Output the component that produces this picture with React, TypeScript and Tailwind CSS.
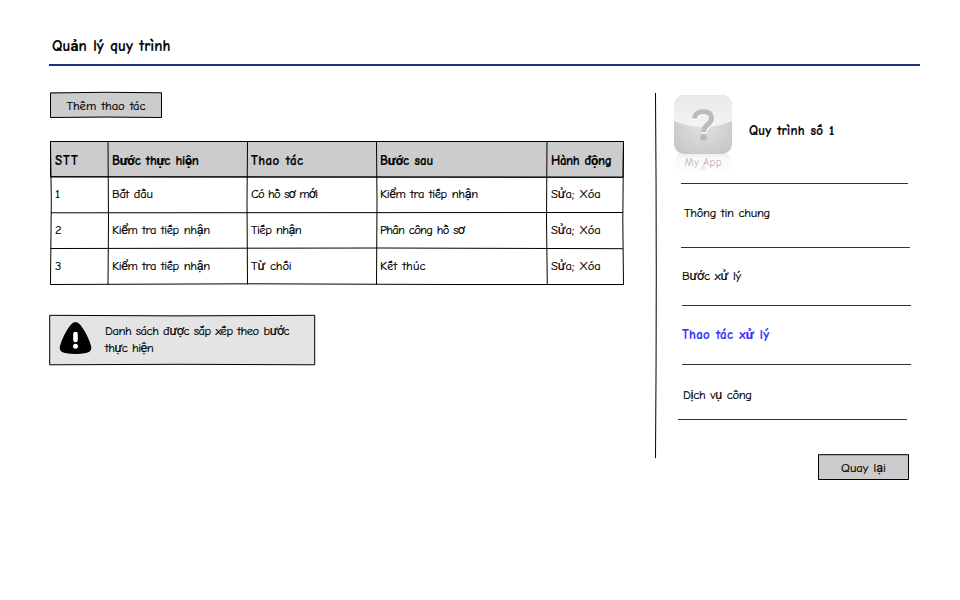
import type { ReactNode } from "react";

type Cell = { text: string; tracking?: string };
type Row = { no: string; cells: Cell[] };

const check: Cell = { text: "Kiểm tra tiếp nhận", tracking: "tracking-[-0.33px]" };

const rows: Row[] = [
  { no: "1", cells: [{ text: "Bắt đầu", tracking: "tracking-[-0.3px]" }, { text: "Có hồ sơ mới", tracking: "tracking-[-0.8px]" }, check] },
  { no: "2", cells: [check, { text: "Tiếp nhận", tracking: "tracking-[-0.5px]" }, { text: "Phân công hồ sơ", tracking: "tracking-[-0.68px]" }] },
  { no: "3", cells: [check, { text: "Từ chối", tracking: "tracking-[-0.15px]" }, { text: "Kết thúc", tracking: "tracking-[0.1px]" }] },
];

const columns = "grid grid-cols-[57px_139px_129px_171px_76px] h-9 items-center *:pl-1 *:whitespace-nowrap";

/* Hand-drawn strokes laid over the box they outline */
function Sketch({ d, width = 1 }: { d: string; width?: number }) {
  return (
    <svg className="pointer-events-none absolute inset-0 size-full overflow-visible" fill="none" stroke="#000" strokeWidth={width}>
      <path d={d} />
    </svg>
  );
}

function SketchButton({ className, outline, children }: { className: string; outline: string; children: ReactNode }) {
  return (
    <button className={`relative flex h-[26px] items-center justify-center bg-[#cccccc] pt-[3px] text-[12.5px] [word-spacing:1px] ${className}`}>
      <Sketch d={outline} />
      <span className="relative">{children}</span>
    </button>
  );
}

function AppIcon() {
  return (
    <svg className="h-[80px] w-[62px] shrink-0" viewBox="0 0 62 80">
      <defs>
        <linearGradient id="top" x1="0" y1="0" x2="0" y2="1">
          <stop offset="0" stopColor="#e9e9e9" />
          <stop offset="1" stopColor="#f3f3f3" />
        </linearGradient>
        <radialGradient id="body" cx=".5" cy=".45" r=".6">
          <stop offset="0" stopColor="#e4e4e4" />
          <stop offset="1" stopColor="#c9c9c9" />
        </radialGradient>
        <linearGradient id="mirror" x1="0" y1="0" x2="0" y2="1">
          <stop offset="0" stopColor="#ededed" />
          <stop offset=".35" stopColor="#fafafa" />
          <stop offset="1" stopColor="#fcfcfc" />
        </linearGradient>
        <clipPath id="tile">
          <rect x="2" y="2" width="58" height="59" rx="10" />
        </clipPath>
      </defs>
      <path d="M3 78V67Q3 60 11 60H51Q59 60 59 67V78Z" fill="url(#mirror)" />
      <g clipPath="url(#tile)">
        <rect x="2" y="2" width="58" height="59" fill="url(#body)" />
        <path d="M2 2H60V28Q31 40 2 28Z" fill="url(#top)" />
      </g>
      <path d="M22.500 25.500C23 20.500 26 18.800 31.500 18.800S39.500 21 39.500 25.500C39.500 32 31.500 31 31.500 39" fill="none" stroke="#fff" strokeWidth="5" transform="translate(.6 1)" />
      <path d="M22.500 25.500C23 20.500 26 18.800 31.500 18.800S39.500 21 39.500 25.500C39.500 32 31.500 31 31.500 39" fill="none" stroke="#bcbcbc" strokeWidth="5" />
      <rect x="28.500" y="41.500" width="6" height="6" fill="#b8b8b8" />
      <rect x="28.500" y="73" width="5" height="4" fill="#ececec" />
      <text x="31" y="73" textAnchor="middle" textLength="37" fontSize="11" fill="#bdb0c0" className="[word-spacing:0px]">
        My App
      </text>
    </svg>
  );
}

export default function App() {
  return (
    <div className="h-[600px] w-[960px] overflow-hidden bg-white pl-[49px] pt-9 font-['Comic_Sans_MS','Comic_Neue','Roboto',sans-serif] text-[12.5px] leading-[17px] text-black [-webkit-text-stroke:0.2px] [word-spacing:1px]">
      <header className="h-[30px] w-[871px] border-b-2 border-[#1b3282] pl-[3px] text-[15px] font-bold leading-5 tracking-[0.1px]">
        Quản lý quy trình
      </header>

      <div className="flex">
        <main className="w-[606px] pl-px pt-[26px]">
          <SketchButton className="w-28" outline="M.5 1Q55 -.4 111.500 .8V25.500Q55 24.500 .5 25.500Z">
            Thêm thao tác
          </SketchButton>

          <div className="relative mt-[23px] w-[573px] pl-px">
            <div className={`${columns} bg-[#cccccc] pt-[2px] text-[13px] font-bold`}>
              <span className="tracking-[0.9px]">STT</span>
              <span className="tracking-[-0.25px]">Bước thực hiện</span>
              <span className="tracking-[0.4px]">Thao tác</span>
              <span className="tracking-[-0.1px]">Bước sau</span>
              <span className="tracking-[-0.4px]">Hành động</span>
            </div>
            {rows.map((row) => (
              <div key={row.no} className={`${columns} pb-px`}>
                <span>{row.no}</span>
                {row.cells.map((cell, i) => (
                  <span key={i} className={cell.tracking}>
                    {cell.text}
                  </span>
                ))}
                <span className="tracking-[-0.1px]">Sửa; Xóa</span>
              </div>
            ))}
            <Sketch d="M.5 .5H573.500M.5 35.800L573 36.200M1 71.800L573 71.500M.5 107.500L330 107L573 107.700M.5 143.500L200 142.800L400 143.500H573.500M.5 .5L1.300 60L.5 143.500M58 .5L58.500 80L58 143.500M197.500 .5L197 60L197.500 143.500M326.500 .5L327 60L326.500 143.500M497 .5L496.500 80L497.300 143.500M573.500 .5L572.800 80L573.500 143.500" />
            <Sketch d="M.5 .5H573.500L573 36.300L.5 35.800Z" />
          </div>

          <div className="relative -ml-px mt-[30px] flex h-[50px] w-[266px] bg-[#e4e4e4] pl-[10px] pt-[7px]">
            <Sketch d="M.7 .3L130 .9L265.700 .3V49.800L130 49.300L.7 49.800Z" />
            <svg className="h-8 w-[33px] shrink-0" viewBox="0 0 33 32">
              <path d="M11.500 3Q16.500 -3 21.500 3Q29 13 32 24Q33.500 30 27 31Q16.500 33 6 31Q-.5 30 1 24Q4 13 11.500 3Z" />
              <path d="M16.500 12V18" stroke="#fff" strokeWidth="4.600" strokeLinecap="round" />
              <circle cx="16.500" cy="24.300" r="2.500" fill="#fff" />
            </svg>
            <p className="whitespace-nowrap pl-[13px] pt-px tracking-[-0.45px]">
              Danh sách được sắp xếp theo bước
              <br />
              thực hiện
            </p>
          </div>
        </main>

        <aside className="relative mt-[27px] h-[365px] w-[260px] pl-[17px]">
          <Sketch d="M.5 0Q2 180 .5 365" />
          <div className="flex h-[90px] w-[248px] items-start">
            <AppIcon />
            <h2 className="pl-[15px] pt-[29px] text-[13px] font-bold tracking-[0.2px]">Quy trình số 1</h2>
          </div>
          <nav>
            <div className="ml-[9px] h-[65px] w-[227px] border-t border-[#333] pl-[3px] pt-[21px] tracking-[-0.25px]">Thông tin chung</div>
            <div className="-mt-px ml-[9px] h-[58px] w-[229px] border-t border-[#333] pl-px pt-[20px] tracking-[-0.2px]">Bước xử lý</div>
            <div className="ml-[10px] h-[59px] w-[229px] border-t border-[#333] pt-[20px] text-[13px] font-bold tracking-[0.25px] text-[#3333ff]">Thao tác xử lý</div>
            <div className="ml-[10px] h-[55px] w-[229px] border-t border-[#333] pl-px pt-[22px] tracking-[-0.3px]">Dịch vụ công</div>
            <div className="ml-[6px] h-[35px] w-[229px] border-t border-[#333]" />
          </nav>
          <SketchButton className="ml-[146px] w-[91px]" outline="M.5 .7H90.500V25.500H.5Z">
            Quay lại
          </SketchButton>
        </aside>
      </div>
    </div>
  );
}
